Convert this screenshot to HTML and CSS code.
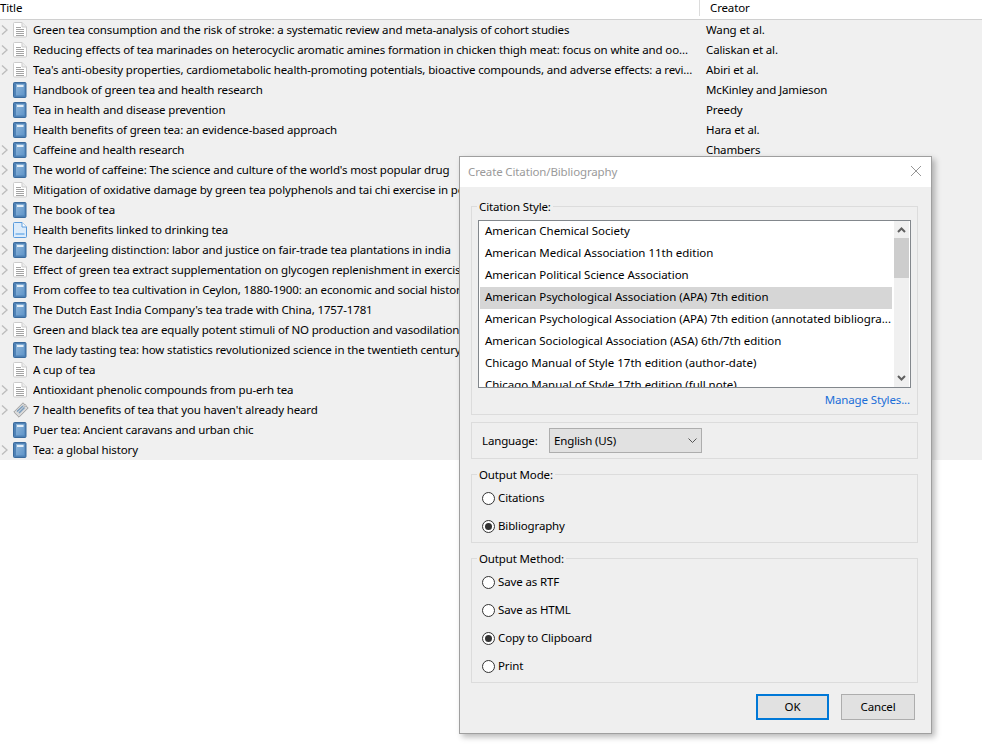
FILE: index.html
```html
<!DOCTYPE html>
<html lang="en">
<head>
<meta charset="utf-8">
<title>Create Citation/Bibliography</title>
<link rel="stylesheet" href="styles.css">
</head>
<body>
<svg class="defs" width="0" height="0">
  <defs>
    <linearGradient id="bookface" x1="0" y1="0" x2="1" y2="1">
      <stop offset="0" stop-color="#8fb6da"/>
      <stop offset="1" stop-color="#5f94c8"/>
    </linearGradient>
    <symbol id="chev" viewBox="0 0 8 12"><path d="M2 1.500 7 6l-5 4.500" fill="none" stroke="#bdbdbd" stroke-width="1.400"/></symbol>
    <symbol id="doc" viewBox="0 0 14 16">
      <path d="M.5 1.500a1 1 0 0 1 1-1h7.500l4.500 4.500v9a1 1 0 0 1-1 1h-11a1 1 0 0 1-1-1z" fill="#fff" stroke="#cbcbcb"/>
      <path d="M9 .5v4.500h4.500" fill="#ececec" stroke="#cbcbcb"/>
      <path d="M3 5.500h5M3 7.500h8M3 9.500h8M3 11.500h8M3 13.500h8" stroke="#a3a3a3" stroke-width="1"/>
    </symbol>
    <symbol id="book" viewBox="0 0 14 16">
      <rect x=".5" y=".5" width="12.500" height="15" rx="1" fill="#4f82b6" stroke="#3a6a9c"/>
      <rect x="3" y="2" width="8.500" height="11.500" fill="url(#bookface)"/>
      <rect x="4" y="3" width="6.500" height="2" fill="#e3eef8"/>
    </symbol>
    <symbol id="web" viewBox="0 0 14 16">
      <path d="M.5 1.500a1 1 0 0 1 1-1h7.500l4.500 4.500v9.500a1 1 0 0 1-1 1h-11a1 1 0 0 1-1-1z" fill="#dcebfa" stroke="#5a9bdc"/>
      <path d="M9 .5v4.500h4.500" fill="#fff" stroke="#5a9bdc"/>
      <rect x="2.500" y="11" width="9" height="2" fill="#8fc0ee"/>
    </symbol>
    <symbol id="tag" viewBox="0 0 16 16">
      <path d="M10 .8 15.200 6 6 15.200.8 10z" fill="#d9d9d9" stroke="#a0a0a0"/>
      <path d="M4 9.500 10 4M6 11 11.500 5.500" stroke="#7b9dbd" stroke-width="1.500"/>
      <circle cx="12" cy="3.500" r="1" fill="#fff" stroke="#8a8a8a" stroke-width=".6"/>
    </symbol>
  </defs>
</svg>

<main class="library">
  <header class="lib-head">
    <div class="col-title">Title</div>
    <div class="col-creator">Creator</div>
  </header>
  <ul class="rows">
    <li class="row"><svg class="chev"><use href="#chev"/></svg><svg class="ico"><use href="#doc"/></svg><span class="t">Green tea consumption and the risk of stroke: a systematic review and meta-analysis of cohort studies</span><span class="c">Wang et al.</span></li>
    <li class="row"><svg class="chev"><use href="#chev"/></svg><svg class="ico"><use href="#doc"/></svg><span class="t">Reducing effects of tea marinades on heterocyclic aromatic amines formation in chicken thigh meat: focus on white and oo...</span><span class="c">Caliskan et al.</span></li>
    <li class="row"><svg class="chev"><use href="#chev"/></svg><svg class="ico"><use href="#doc"/></svg><span class="t">Tea's anti-obesity properties, cardiometabolic health-promoting potentials, bioactive compounds, and adverse effects: a revi...</span><span class="c">Abiri et al.</span></li>
    <li class="row"><span class="nochev"></span><svg class="ico"><use href="#book"/></svg><span class="t">Handbook of green tea and health research</span><span class="c">McKinley and Jamieson</span></li>
    <li class="row"><span class="nochev"></span><svg class="ico"><use href="#book"/></svg><span class="t">Tea in health and disease prevention</span><span class="c">Preedy</span></li>
    <li class="row"><span class="nochev"></span><svg class="ico"><use href="#book"/></svg><span class="t">Health benefits of green tea: an evidence-based approach</span><span class="c">Hara et al.</span></li>
    <li class="row"><svg class="chev"><use href="#chev"/></svg><svg class="ico"><use href="#book"/></svg><span class="t">Caffeine and health research</span><span class="c">Chambers</span></li>
    <li class="row"><svg class="chev"><use href="#chev"/></svg><svg class="ico"><use href="#book"/></svg><span class="t">The world of caffeine: The science and culture of the world's most popular drug</span></li>
    <li class="row"><svg class="chev"><use href="#chev"/></svg><svg class="ico"><use href="#doc"/></svg><span class="t">Mitigation of oxidative damage by green tea polyphenols and tai chi exercise in postmenopausal women</span></li>
    <li class="row"><svg class="chev"><use href="#chev"/></svg><svg class="ico"><use href="#book"/></svg><span class="t">The book of tea</span></li>
    <li class="row"><svg class="chev"><use href="#chev"/></svg><svg class="ico"><use href="#web"/></svg><span class="t">Health benefits linked to drinking tea</span></li>
    <li class="row"><svg class="chev"><use href="#chev"/></svg><svg class="ico"><use href="#book"/></svg><span class="t">The darjeeling distinction: labor and justice on fair-trade tea plantations in india</span></li>
    <li class="row"><svg class="chev"><use href="#chev"/></svg><svg class="ico"><use href="#doc"/></svg><span class="t">Effect of green tea extract supplementation on glycogen replenishment in exercise</span></li>
    <li class="row"><svg class="chev"><use href="#chev"/></svg><svg class="ico"><use href="#book"/></svg><span class="t">From coffee to tea cultivation in Ceylon, 1880-1900: an economic and social history</span></li>
    <li class="row"><svg class="chev"><use href="#chev"/></svg><svg class="ico"><use href="#book"/></svg><span class="t">The Dutch East India Company's tea trade with China, 1757-1781</span></li>
    <li class="row"><svg class="chev"><use href="#chev"/></svg><svg class="ico"><use href="#doc"/></svg><span class="t">Green and black tea are equally potent stimuli of NO production and vasodilation</span></li>
    <li class="row"><span class="nochev"></span><svg class="ico"><use href="#book"/></svg><span class="t">The lady tasting tea: how statistics revolutionized science in the twentieth century</span></li>
    <li class="row"><span class="nochev"></span><svg class="ico"><use href="#doc"/></svg><span class="t">A cup of tea</span></li>
    <li class="row"><svg class="chev"><use href="#chev"/></svg><svg class="ico"><use href="#doc"/></svg><span class="t">Antioxidant phenolic compounds from pu-erh tea</span></li>
    <li class="row"><svg class="chev"><use href="#chev"/></svg><svg class="ico ico-tag"><use href="#tag"/></svg><span class="t">7 health benefits of tea that you haven't already heard</span></li>
    <li class="row"><span class="nochev"></span><svg class="ico"><use href="#book"/></svg><span class="t">Puer tea: Ancient caravans and urban chic</span></li>
    <li class="row"><svg class="chev"><use href="#chev"/></svg><svg class="ico"><use href="#book"/></svg><span class="t">Tea: a global history</span></li>
  </ul>
</main>

<section class="dialog">
  <div class="titlebar">
    <span class="dlg-title">Create Citation/Bibliography</span>
    <svg class="close" viewBox="0 0 10 10"><path d="M0 0l10 10M10 0 0 10" stroke="#8a8a8a" stroke-width=".9" fill="none"/></svg>
  </div>
  <div class="dlg-body">
    <fieldset class="group group-style">
      <legend>Citation Style:</legend>
      <div class="listbox">
        <ul class="styles">
          <li>American Chemical Society</li>
          <li>American Medical Association 11th edition</li>
          <li>American Political Science Association</li>
          <li class="sel">American Psychological Association (APA) 7th edition</li>
          <li>American Psychological Association (APA) 7th edition (annotated bibliogra...</li>
          <li>American Sociological Association (ASA) 6th/7th edition</li>
          <li>Chicago Manual of Style 17th edition (author-date)</li>
          <li>Chicago Manual of Style 17th edition (full note)</li>
        </ul>
        <div class="scrollbar">
          <svg class="arrow arrow-up" viewBox="0 0 9 6"><path d="M1 5l3.500-3.500L8 5" fill="none" stroke="#606060" stroke-width="2"/></svg>
          <div class="track"><div class="thumb"></div></div>
          <svg class="arrow arrow-down" viewBox="0 0 9 6"><path d="M1 1l3.500 3.500L8 1" fill="none" stroke="#606060" stroke-width="2"/></svg>
        </div>
      </div>
      <div class="manage"><a href="#">Manage Styles...</a></div>
    </fieldset>

    <div class="group group-lang">
      <span class="lang-label">Language:</span>
      <div class="select">
        <span>English (US)</span>
        <svg class="sel-arrow" viewBox="0 0 9 5"><path d="M.5.500 4.500 4.500 8.500.5" fill="none" stroke="#555" stroke-width="1"/></svg>
      </div>
    </div>

    <fieldset class="group group-radio group-mode">
      <legend>Output Mode:</legend>
      <label class="radio"><span class="dot"></span>Citations</label>
      <label class="radio"><span class="dot on"></span>Bibliography</label>
    </fieldset>

    <fieldset class="group group-radio group-method">
      <legend>Output Method:</legend>
      <label class="radio"><span class="dot"></span>Save as RTF</label>
      <label class="radio"><span class="dot"></span>Save as HTML</label>
      <label class="radio"><span class="dot on"></span>Copy to Clipboard</label>
      <label class="radio"><span class="dot"></span>Print</label>
    </fieldset>

    <div class="actions">
      <button class="btn default" type="button">OK</button>
      <button class="btn" type="button">Cancel</button>
    </div>
  </div>
</section>
</body>
</html>
```
FILE: styles.css
```css
* { box-sizing: border-box; }
html, body { margin: 0; padding: 0; height: 100%; }
body {
  position: relative;
  width: 982px;
  height: 753px;
  overflow: hidden;
  background: #fff;
  color: #000;
  font-family: "Noto Sans", "Open Sans", sans-serif;
  font-size: 11.5px;
  letter-spacing: -0.14px;
  line-height: 16px;
}
.defs { position: absolute; }

.lib-head {
  display: flex;
  height: 20px;
  border-bottom: 1px solid #d0d0d0;
}
.col-title { width: 700px; height: 16px; border-right: 1px solid #dcdcdc; }
.col-creator { padding-left: 10px; }

.rows { list-style: none; margin: 0; padding: 0; background: #f0f0f0; }
.row { display: flex; align-items: center; height: 20px; white-space: nowrap; }
.chev { width: 8px; height: 12px; margin-right: 5px; flex: none; }
.nochev { width: 8px; margin-right: 5px; flex: none; }
.ico { width: 14px; height: 16px; flex: none; margin-right: 6px; }
.ico-tag { width: 16px; margin-right: 4px; }
.t { width: 667px; overflow: hidden; flex: none; }
.c { flex: none; margin-left: 6px; }

.dialog {
  position: absolute;
  left: 459px;
  top: 156px;
  width: 473px;
  height: 578px;
  display: flex;
  flex-direction: column;
  background: #efefef;
  border: 1px solid #9f9f9f;
  box-shadow: 3px 3px 6px rgba(0,0,0,.28);
}
.titlebar {
  display: flex;
  align-items: center;
  justify-content: space-between;
  height: 30px;
  padding: 0 10px 0 8px;
  background: #fff;
}
.dlg-title { color: #9a9a9a; }
.close { width: 10px; height: 10px; margin-bottom: 2px; }

.dlg-body {
  flex: 1;
  display: flex;
  flex-direction: column;
  padding: 11px 13px 0 11px;
}
.group {
  margin: 0;
  padding: 0;
  border: 1px solid #dcdcdc;
  min-width: 0;
}
.group legend { margin-left: 5px; padding: 0 2px; line-height: 16px; transform: translateY(1px); }

.group-style { height: 217px; padding: 6px 6px 0; }
.group-style legend { margin-left: -1px; }
.listbox {
  display: flex;
  height: 168px;
  background: #fff;
  border: 1px solid #82878c;
}
.styles {
  list-style: none;
  flex: 1;
  min-width: 0;
  margin: 0;
  padding: 0 2px 0 1px;
  overflow: hidden;
}
.styles li { height: 22px; padding-left: 5px; line-height: 20px; letter-spacing: -0.01px; white-space: nowrap; }
.styles .sel { background: #d6d6d6; }
.scrollbar { display: flex; flex-direction: column; width: 15px; margin-right: 1px; background: #f0f0f0; flex: none; }
.arrow { width: 9px; height: 6px; flex: none; margin-left: auto; margin-right: auto; }
.arrow-up { margin-top: 6px; margin-bottom: 5px; }
.arrow-down { margin-top: 5px; margin-bottom: 6px; }
.track { flex: 1; }
.thumb { height: 40px; background: #cdcdcd; }
.manage { margin-top: 4px; text-align: right; padding-right: 1px; }
.manage a { color: #1a6ed8; text-decoration: none; }

.group-lang {
  display: flex;
  align-items: center;
  height: 37px;
  margin-top: 7px;
  padding-left: 10px;
}
.lang-label { width: 67px; flex: none; }
.select {
  display: flex;
  align-items: center;
  justify-content: space-between;
  width: 153px;
  height: 25px;
  padding: 0 4px;
  background: #e1e1e1;
  border: 1px solid #adadad;
}
.sel-arrow { width: 9px; height: 5px; }

.group-radio { margin-top: 7px; }
.group-mode { height: 77px; }
.group-method { height: 133px; }
.group-radio legend + .radio { margin-top: 8px; }
.radio { display: flex; align-items: center; height: 16px; margin: 0 0 12px 10px; }
.dot {
  display: flex;
  align-items: center;
  justify-content: center;
  width: 13px;
  height: 13px;
  margin-right: 3px;
  background: #fff;
  border: 1px solid #333;
  border-radius: 50%;
}
.dot.on::after {
  content: "";
  width: 7px;
  height: 7px;
  border-radius: 50%;
  background: #333;
}

.actions { display: flex; justify-content: flex-end; gap: 12px; margin-top: 11px; padding-right: 3px; }
.btn {
  width: 74px;
  height: 26px;
  padding: 0;
  background: #e1e1e1;
  border: 1px solid #adadad;
  font: inherit;
  letter-spacing: inherit;
  color: #000;
}
.btn.default { width: 73px; border: 2px solid #0078d7; }
```
